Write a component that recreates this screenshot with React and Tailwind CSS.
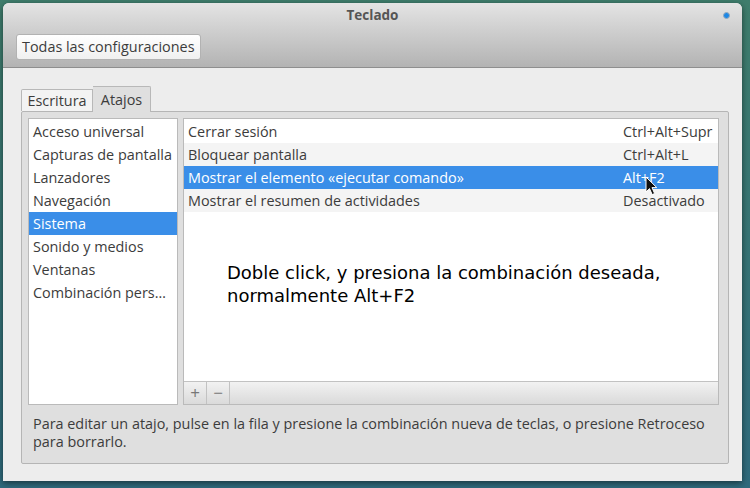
import React from "react";

const categories = [
  "Acceso universal",
  "Capturas de pantalla",
  "Lanzadores",
  "Navegación",
  "Sistema",
  "Sonido y medios",
  "Ventanas",
  "Combinación pers…",
];

const shortcuts = [
  { name: "Cerrar sesión", keys: "Ctrl+Alt+Supr" },
  { name: "Bloquear pantalla", keys: "Ctrl+Alt+L" },
  { name: "Mostrar el elemento «ejecutar comando»", keys: "Alt+F2" },
  { name: "Mostrar el resumen de actividades", keys: "Desactivado" },
];

const Cursor = () => (
  <svg
    className="absolute left-[461px] top-[10px]"
    width="13"
    height="20"
    viewBox="0 0 13 20"
  >
    <path
      d="M1 1 L1 16 L4.5 12.6 L7.2 18.6 L9.6 17.5 L7 11.6 L11.8 11.6 Z"
      fill="#111"
      stroke="#fff"
      strokeWidth="1"
      strokeLinejoin="round"
    />
  </svg>
);

const App = () => {
  const selectedCategory = 4;
  const selectedShortcut = 2;

  return (
    <div
      className="w-[750px] h-[488px] bg-gradient-to-b from-[#3f7d6c] to-[#2f6a7c] pt-[3px] pl-[3px] overflow-hidden text-[#3c3c3c]"
      style={{ fontFamily: "'Open Sans', 'Noto Sans', sans-serif" }}
    >
      <div className="w-[739px] h-[478px] flex flex-col rounded-t-[6px] overflow-hidden bg-[#ededed] shadow-[0_2px_6px_rgba(0,0,0,0.5)]">
        {/* title bar */}
        <div className="h-[65px] shrink-0 bg-gradient-to-b from-[#e4e4e4] to-[#b3b3b3] border-b border-[#8e8e8e] flex flex-col">
          <div className="h-[24px] flex items-center justify-center relative">
            <span className="text-[13.5px] font-bold text-[#555]">Teclado</span>
            <span className="absolute right-[12px] top-[9px] w-[7px] h-[7px] rounded-full bg-[#1e88e5] border border-[#9ab]" />
          </div>
          <div className="pl-[13px] mt-[7px]">
            <button className="h-[26px] px-[5px] rounded-[3px] border border-[#b2b2b2] bg-gradient-to-b from-[#ffffff] to-[#f0f0f0] text-[14.4px] text-[#3c3c3c]">
              Todas las configuraciones
            </button>
          </div>
        </div>

        {/* content */}
        <div className="flex-1 px-[18px] pt-[18px] flex flex-col">
          <div className="flex items-end h-[25px] relative z-10">
            <div className="h-[22px] w-[72px] border border-b-0 border-[#b8b8b8] bg-[#f3f3f3] rounded-tl-[2px] flex items-center justify-center text-[14.4px]">
              Escritura
            </div>
            <div className="h-[26px] w-[58px] border border-b-0 border-l-0 border-[#b8b8b8] bg-[#dfdfdf] rounded-tr-[2px] flex items-center justify-center text-[14.4px] -mb-px">
              Atajos
            </div>
          </div>

          <div className="w-[708px] h-[353px] border border-[#b5b5b5] bg-[#dfdfdf] rounded-[2px] pl-[6px] pt-[6px] flex flex-col">
            <div className="flex gap-[5px] h-[287px]">
              {/* categories */}
              <div className="w-[150px] h-full bg-white border border-[#bababa] pt-px">
                {categories.map((c, i) => (
                  <div
                    key={c}
                    className={
                      i === selectedCategory
                        ? "h-[23px] pl-[4px] flex items-center text-[14.4px] bg-[#3a8ee8] text-white"
                        : "h-[23px] pl-[4px] flex items-center text-[14.4px]"
                    }
                  >
                    {c}
                  </div>
                ))}
              </div>

              {/* shortcuts */}
              <div className="w-[536px] h-full border border-[#bababa] flex flex-col">
                <div className="flex-1 bg-white pt-px">
                  {shortcuts.map((s, i) => (
                    <div
                      key={s.name}
                      className={
                        i === selectedShortcut
                          ? "h-[23px] flex items-center text-[14.4px] bg-[#3a8ee8] text-white relative"
                          : i % 2 === 1
                          ? "h-[23px] flex items-center text-[14.4px] bg-[#f4f4f4]"
                          : "h-[23px] flex items-center text-[14.4px]"
                      }
                    >
                      <span className="pl-[4px] w-[439px]">{s.name}</span>
                      <span>{s.keys}</span>
                      {i === selectedShortcut && <Cursor />}
                    </div>
                  ))}
                  <div
                    className="pl-[43px] pt-[49px] text-[18px] leading-[23px] text-black"
                    style={{ fontFamily: "'DejaVu Sans', sans-serif" }}
                  >
                    Doble click, y presiona la combinación deseada,
                    <br />
                    normalmente Alt+F2
                  </div>
                </div>
                <div className="h-[23px] border-t border-[#c2c2c2] bg-gradient-to-b from-[#f2f2f2] to-[#dadada] flex">
                  <div className="w-[23px] border-r border-[#c2c2c2] flex items-center justify-center text-[#777] text-[17px]">
                    +
                  </div>
                  <div className="w-[23px] border-r border-[#c2c2c2] flex items-center justify-center text-[#777] text-[17px]">
                    −
                  </div>
                </div>
              </div>
            </div>

            <p className="mt-[10px] pl-[5px] pr-[8px] text-[14.4px] leading-[18px]">
              Para editar un atajo, pulse en la fila y presione la combinación
              nueva de teclas, o presione Retroceso para borrarlo.
            </p>
          </div>
        </div>
      </div>
    </div>
  );
};

export default App;
